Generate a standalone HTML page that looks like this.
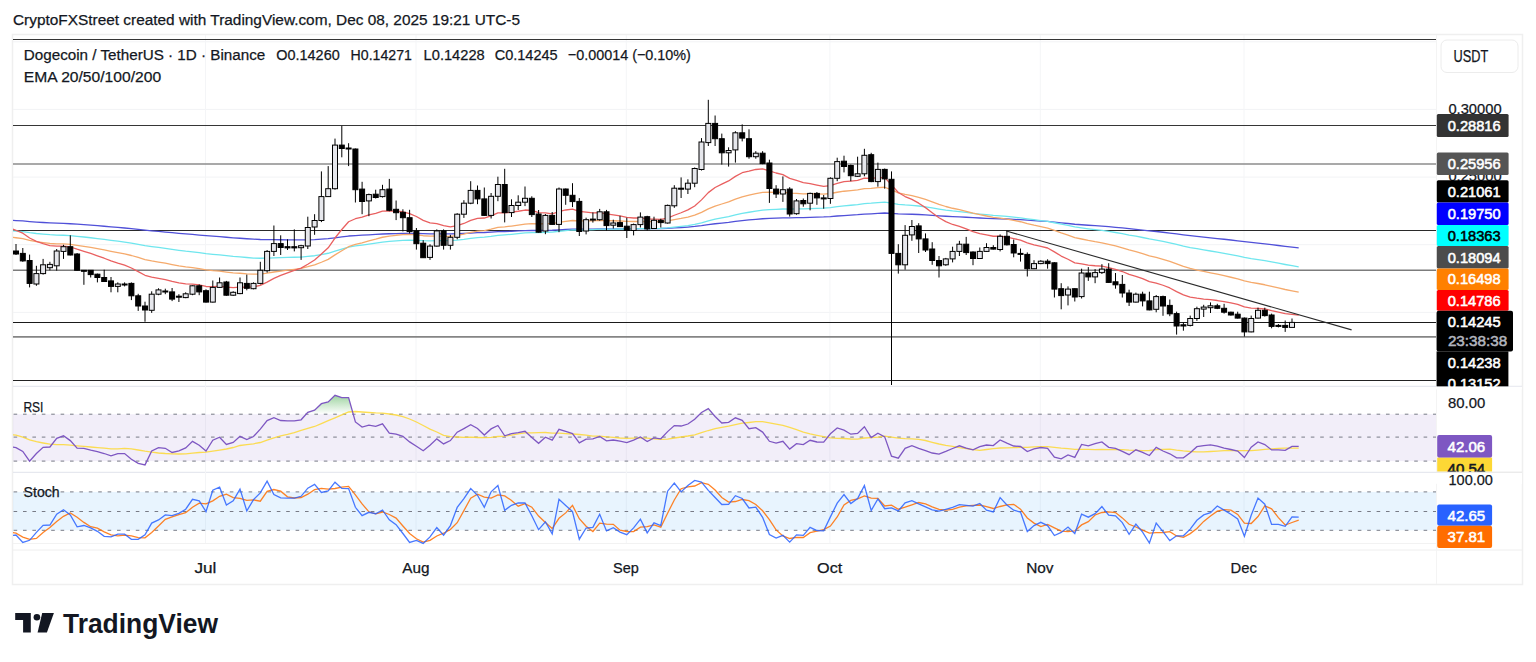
<!DOCTYPE html><html><head><meta charset="utf-8"><style>
html,body{margin:0;padding:0;background:#fff;width:1536px;height:662px;overflow:hidden}
svg{position:absolute;left:0;top:0}
text{font-family:'Liberation Sans', sans-serif}
</style></head><body>
<svg width="1536" height="662" viewBox="0 0 1536 662">
<text x="13" y="24.5" font-size="15.5" fill="#131722" stroke="#131722" stroke-width="0.25" textLength="507" lengthAdjust="spacingAndGlyphs">CryptoFXStreet created with TradingView.com, Dec 08, 2025 19:21 UTC-5</text>
<rect x="12.5" y="34.5" width="1510" height="550" fill="none" stroke="#efefef" stroke-width="1.5"/>
<line x1="13" y1="386.3" x2="1522" y2="386.3" stroke="#e0e3eb" stroke-width="1"/>
<line x1="13" y1="472.3" x2="1522" y2="472.3" stroke="#e0e3eb" stroke-width="1"/>
<line x1="13" y1="550" x2="1522" y2="550" stroke="#eeeeee" stroke-width="1"/>
<line x1="13" y1="543.5" x2="1436" y2="543.5" stroke="#f2f2f2" stroke-width="1"/>
<line x1="1436.5" y1="35" x2="1436.5" y2="584" stroke="#f4f4f4" stroke-width="1"/>
<line x1="13" y1="41.8" x2="1436" y2="41.8" stroke="#f2f3f5" stroke-width="1"/>
<line x1="13" y1="109.4" x2="1436" y2="109.4" stroke="#f2f3f5" stroke-width="1"/>
<line x1="13" y1="177.1" x2="1436" y2="177.1" stroke="#f2f3f5" stroke-width="1"/>
<line x1="13" y1="244.7" x2="1436" y2="244.7" stroke="#f2f3f5" stroke-width="1"/>
<line x1="13" y1="312.4" x2="1436" y2="312.4" stroke="#f2f3f5" stroke-width="1"/>
<line x1="205.5" y1="35" x2="205.5" y2="543" stroke="#f4f5f7" stroke-width="1"/>
<line x1="416.0" y1="35" x2="416.0" y2="543" stroke="#f4f5f7" stroke-width="1"/>
<line x1="626.3" y1="35" x2="626.3" y2="543" stroke="#f4f5f7" stroke-width="1"/>
<line x1="829.9" y1="35" x2="829.9" y2="543" stroke="#f4f5f7" stroke-width="1"/>
<line x1="1040.3" y1="35" x2="1040.3" y2="543" stroke="#f4f5f7" stroke-width="1"/>
<line x1="1244.0" y1="35" x2="1244.0" y2="543" stroke="#f4f5f7" stroke-width="1"/>
<rect x="13" y="414.2" width="1423" height="46.9" fill="#7e57c2" fill-opacity="0.1"/>
<rect x="13" y="491.9" width="1423" height="38.4" fill="#2196f3" fill-opacity="0.1"/>
<line x1="13.6" y1="414.2" x2="1436" y2="414.2" stroke="#787b86" stroke-width="1" stroke-dasharray="3.6 5.8"/>
<line x1="13.6" y1="437.1" x2="1436" y2="437.1" stroke="#787b86" stroke-width="1" stroke-dasharray="3.6 5.8"/>
<line x1="13.6" y1="461.1" x2="1436" y2="461.1" stroke="#787b86" stroke-width="1" stroke-dasharray="3.6 5.8"/>
<line x1="13.6" y1="491.9" x2="1436" y2="491.9" stroke="#787b86" stroke-width="1" stroke-dasharray="3.6 5.8"/>
<line x1="13.6" y1="511.5" x2="1436" y2="511.5" stroke="#787b86" stroke-width="1" stroke-dasharray="3.6 5.8"/>
<line x1="13.6" y1="530.3" x2="1436" y2="530.3" stroke="#787b86" stroke-width="1" stroke-dasharray="3.6 5.8"/>
<line x1="13" y1="39.5" x2="1436" y2="39.5" stroke="#363636" stroke-width="1.1"/>
<line x1="13" y1="125.5" x2="1436" y2="125.5" stroke="#363636" stroke-width="1.1"/>
<line x1="13" y1="164.1" x2="1436" y2="164.1" stroke="#8c8c8c" stroke-width="1.5"/>
<line x1="13" y1="230.5" x2="1436" y2="230.5" stroke="#2a2a2a" stroke-width="1.1"/>
<line x1="13" y1="270.3" x2="1436" y2="270.3" stroke="#7c7c7c" stroke-width="1.4"/>
<line x1="13" y1="322.5" x2="1436" y2="322.5" stroke="#1a1a1a" stroke-width="1.1"/>
<line x1="13" y1="336.8" x2="1436" y2="336.8" stroke="#858585" stroke-width="1.8"/>
<line x1="13" y1="380.5" x2="1436" y2="380.5" stroke="#222222" stroke-width="1.2"/>
<defs><clipPath id="mainclip"><rect x="13" y="36" width="1423" height="350"/></clipPath></defs>
<g clip-path="url(#mainclip)">
<polyline points="9.2,220.20 16.0,220.54 22.8,220.94 29.6,221.56 36.4,222.08 43.1,222.50 49.9,222.92 56.7,223.20 63.5,223.43 70.3,223.75 77.1,224.21 83.9,224.67 90.7,225.17 97.4,225.69 104.2,226.25 111.0,226.84 117.8,227.41 124.6,227.98 131.4,228.65 138.2,229.42 145.0,230.22 151.7,230.86 158.5,231.45 165.3,232.04 172.1,232.71 178.9,233.35 185.7,233.95 192.5,234.47 199.2,235.04 206.0,235.70 212.8,236.22 219.6,236.68 226.4,237.26 233.2,237.81 240.0,238.26 246.8,238.76 253.5,239.20 260.3,239.51 267.1,239.63 273.9,239.67 280.7,239.75 287.5,239.83 294.3,239.91 301.1,239.97 307.8,239.84 314.6,239.65 321.4,239.22 328.2,238.72 335.0,237.79 341.8,236.90 348.6,236.02 355.4,235.56 362.1,235.22 368.9,234.81 375.7,234.44 382.5,234.00 389.3,233.76 396.1,233.55 402.9,233.40 409.6,233.38 416.4,233.48 423.2,233.72 430.0,233.84 436.8,233.81 443.6,233.93 450.4,233.96 457.2,233.77 463.9,233.46 470.7,233.03 477.5,232.69 484.3,232.52 491.1,232.16 497.9,231.69 504.7,231.50 511.5,231.24 518.2,230.95 525.0,230.62 531.8,230.47 538.6,230.48 545.4,230.33 552.2,230.27 559.0,229.86 565.7,229.52 572.5,229.24 579.3,229.26 586.1,229.17 592.9,229.07 599.7,228.90 606.5,228.86 613.3,228.81 620.0,228.78 626.8,228.80 633.6,228.76 640.4,228.64 647.2,228.64 654.0,228.56 660.8,228.50 667.6,228.27 674.3,227.87 681.1,227.49 687.9,227.05 694.7,226.46 701.5,225.62 708.3,224.61 715.1,223.75 721.8,223.05 728.6,222.32 735.4,221.43 742.2,220.60 749.0,219.97 755.8,219.30 762.6,218.75 769.4,218.45 776.1,218.21 782.9,217.92 789.7,217.88 796.5,217.71 803.3,217.58 810.1,217.34 816.9,217.14 823.7,216.96 830.4,216.57 837.2,216.02 844.0,215.53 850.8,215.14 857.6,214.72 864.4,214.13 871.2,213.81 877.9,213.37 884.7,213.02 891.5,213.43 898.3,213.94 905.1,214.15 911.9,214.27 918.7,214.52 925.5,214.87 932.2,215.32 939.0,215.83 945.8,216.26 952.6,216.61 959.4,216.88 966.2,217.24 973.0,217.65 979.8,217.98 986.5,218.28 993.3,218.58 1000.1,218.76 1006.9,219.02 1013.7,219.36 1020.5,219.70 1027.3,220.19 1034.0,220.62 1040.8,221.03 1047.6,221.45 1054.4,222.12 1061.2,222.86 1068.0,223.51 1074.8,224.25 1081.6,224.73 1088.3,225.25 1095.1,225.72 1101.9,226.15 1108.7,226.71 1115.5,227.29 1122.3,227.94 1129.1,228.68 1135.9,229.33 1142.6,230.05 1149.4,230.84 1156.2,231.50 1163.0,232.24 1169.8,233.05 1176.6,233.97 1183.4,234.89 1190.2,235.72 1196.9,236.45 1203.7,237.15 1210.5,237.83 1217.3,238.53 1224.1,239.27 1230.9,240.02 1237.7,240.80 1244.4,241.70 1251.2,242.47 1258.0,243.14 1264.8,243.86 1271.6,244.69 1278.4,245.50 1285.2,246.31 1292.0,247.07 1298.7,247.82" fill="none" stroke="#5050d8" stroke-width="1.3" stroke-linejoin="round"/>
<polyline points="9.2,230.60 16.0,231.06 22.8,231.65 29.6,232.68 36.4,233.49 43.1,234.11 49.9,234.71 56.7,235.03 63.5,235.26 70.3,235.65 77.1,236.34 83.9,237.02 90.7,237.76 97.4,238.55 104.2,239.40 111.0,240.33 117.8,241.20 124.6,242.04 131.4,243.11 138.2,244.35 145.0,245.65 151.7,246.62 158.5,247.47 165.3,248.33 172.1,249.34 178.9,250.29 185.7,251.15 192.5,251.84 199.2,252.63 206.0,253.61 212.8,254.28 219.6,254.84 226.4,255.64 233.2,256.37 240.0,256.89 246.8,257.51 253.5,258.03 260.3,258.27 267.1,258.13 273.9,257.84 280.7,257.64 287.5,257.45 294.3,257.26 301.1,257.03 307.8,256.44 314.6,255.73 321.4,254.56 328.2,253.26 335.0,251.12 341.8,249.08 348.6,247.09 355.4,245.96 362.1,245.08 368.9,244.08 375.7,243.15 382.5,242.09 389.3,241.47 396.1,240.90 402.9,240.44 409.6,240.26 416.4,240.33 423.2,240.67 430.0,240.78 436.8,240.59 443.6,240.68 450.4,240.61 457.2,240.09 463.9,239.36 470.7,238.39 477.5,237.61 484.3,237.17 491.1,236.36 497.9,235.33 504.7,234.88 511.5,234.30 518.2,233.66 525.0,232.96 531.8,232.60 538.6,232.59 545.4,232.25 552.2,232.10 559.0,231.24 565.7,230.53 572.5,229.96 579.3,229.99 586.1,229.78 592.9,229.57 599.7,229.22 606.5,229.15 613.3,229.03 620.0,228.98 626.8,229.01 633.6,228.92 640.4,228.69 647.2,228.69 654.0,228.53 660.8,228.41 667.6,227.95 674.3,227.17 681.1,226.41 687.9,225.56 694.7,224.43 701.5,222.79 708.3,220.83 715.1,219.20 721.8,217.89 728.6,216.55 735.4,214.89 742.2,213.37 749.0,212.25 755.8,211.08 762.6,210.14 769.4,209.71 776.1,209.40 782.9,209.01 789.7,209.11 796.5,208.95 803.3,208.84 810.1,208.54 816.9,208.33 823.7,208.13 830.4,207.54 837.2,206.63 844.0,205.84 850.8,205.24 857.6,204.62 864.4,203.64 871.2,203.21 877.9,202.54 884.7,202.07 891.5,203.08 898.3,204.31 905.1,204.92 911.9,205.35 918.7,206.01 925.5,206.88 932.2,207.95 939.0,209.09 945.8,210.08 952.6,210.90 959.4,211.55 966.2,212.37 973.0,213.28 979.8,214.04 986.5,214.70 993.3,215.38 1000.1,215.79 1006.9,216.37 1013.7,217.09 1020.5,217.83 1027.3,218.84 1034.0,219.73 1040.8,220.55 1047.6,221.40 1054.4,222.74 1061.2,224.18 1068.0,225.47 1074.8,226.89 1081.6,227.80 1088.3,228.77 1095.1,229.64 1101.9,230.42 1108.7,231.45 1115.5,232.51 1122.3,233.70 1129.1,235.06 1135.9,236.23 1142.6,237.51 1149.4,238.94 1156.2,240.08 1163.0,241.39 1169.8,242.82 1176.6,244.47 1183.4,246.09 1190.2,247.52 1196.9,248.73 1203.7,249.89 1210.5,250.99 1217.3,252.13 1224.1,253.32 1230.9,254.54 1237.7,255.80 1244.4,257.31 1251.2,258.52 1258.0,259.54 1264.8,260.65 1271.6,261.95 1278.4,263.23 1285.2,264.50 1292.0,265.65 1298.7,266.77" fill="none" stroke="#6fe6ee" stroke-width="1.3" stroke-linejoin="round"/>
<polyline points="9.2,237.10 16.0,237.76 22.8,238.67 29.6,240.42 36.4,241.73 43.1,242.63 49.9,243.48 56.7,243.78 63.5,243.89 70.3,244.33 77.1,245.35 83.9,246.34 90.7,247.45 97.4,248.63 104.2,249.92 111.0,251.35 117.8,252.63 124.6,253.86 131.4,255.50 138.2,257.48 145.0,259.54 151.7,260.90 158.5,262.04 165.3,263.18 172.1,264.58 178.9,265.86 185.7,266.96 192.5,267.70 199.2,268.65 206.0,269.96 212.8,270.64 219.6,271.12 226.4,272.06 233.2,272.86 240.0,273.25 246.8,273.84 253.5,274.21 260.3,274.06 267.1,273.17 273.9,272.01 280.7,271.05 287.5,270.14 294.3,269.27 301.1,268.35 307.8,266.74 314.6,264.93 321.4,262.25 328.2,259.37 335.0,254.88 341.8,250.71 348.6,246.70 355.4,244.47 362.1,242.78 368.9,240.89 375.7,239.19 382.5,237.25 389.3,236.19 396.1,235.27 402.9,234.58 409.6,234.47 416.4,234.83 423.2,235.73 430.0,236.13 436.8,235.93 443.6,236.30 450.4,236.33 457.2,235.47 463.9,234.20 470.7,232.48 477.5,231.17 484.3,230.55 491.1,229.21 497.9,227.45 504.7,226.87 511.5,226.03 518.2,225.10 525.0,224.05 531.8,223.68 538.6,224.01 545.4,223.67 552.2,223.70 559.0,222.34 565.7,221.28 572.5,220.51 579.3,220.94 586.1,220.89 592.9,220.82 599.7,220.47 606.5,220.67 613.3,220.76 620.0,220.99 626.8,221.36 633.6,221.49 640.4,221.32 647.2,221.61 654.0,221.56 660.8,221.60 667.6,220.97 674.3,219.68 681.1,218.48 687.9,217.10 694.7,215.19 701.5,212.32 708.3,208.84 715.1,206.09 721.8,204.00 728.6,201.90 735.4,199.19 742.2,196.79 749.0,195.22 755.8,193.57 762.6,192.40 769.4,192.24 776.1,192.31 782.9,192.21 789.7,193.07 796.5,193.37 803.3,193.78 810.1,193.77 816.9,193.93 823.7,194.11 830.4,193.49 837.2,192.24 844.0,191.23 850.8,190.62 857.6,189.96 864.4,188.60 871.2,188.33 877.9,187.58 884.7,187.24 891.5,189.84 898.3,192.78 905.1,194.44 911.9,195.70 918.7,197.40 925.5,199.46 932.2,201.85 939.0,204.36 945.8,206.50 952.6,208.26 959.4,209.67 966.2,211.35 973.0,213.20 979.8,214.70 986.5,215.99 993.3,217.28 1000.1,218.03 1006.9,219.08 1013.7,220.41 1020.5,221.74 1027.3,223.58 1034.0,225.15 1040.8,226.57 1047.6,228.02 1054.4,230.42 1061.2,232.97 1068.0,235.17 1074.8,237.60 1081.6,238.99 1088.3,240.47 1095.1,241.73 1101.9,242.81 1108.7,244.36 1115.5,245.94 1122.3,247.79 1129.1,249.92 1135.9,251.66 1142.6,253.59 1149.4,255.80 1156.2,257.40 1163.0,259.30 1169.8,261.44 1176.6,263.97 1183.4,266.40 1190.2,268.45 1196.9,270.02 1203.7,271.48 1210.5,272.82 1217.3,274.22 1224.1,275.71 1230.9,277.25 1237.7,278.85 1244.4,280.93 1251.2,282.40 1258.0,283.50 1264.8,284.76 1271.6,286.39 1278.4,287.96 1285.2,289.50 1292.0,290.79 1298.7,292.04" fill="none" stroke="#f5aa6c" stroke-width="1.3" stroke-linejoin="round"/>
<polyline points="9.2,227.80 16.0,230.30 22.8,233.21 29.6,237.99 36.4,241.38 43.1,243.61 49.9,245.59 56.7,246.11 63.5,246.16 70.3,247.00 77.1,249.22 83.9,251.27 90.7,253.49 97.4,255.78 104.2,258.23 111.0,260.91 117.8,263.11 124.6,265.10 131.4,268.02 138.2,271.64 145.0,275.29 151.7,277.09 158.5,278.31 165.3,279.52 172.1,281.39 178.9,282.89 185.7,283.93 192.5,284.11 199.2,284.85 206.0,286.49 212.8,286.58 219.6,286.22 226.4,287.08 233.2,287.57 240.0,287.12 246.8,287.23 253.5,286.87 260.3,285.29 267.1,282.06 273.9,278.40 280.7,275.46 287.5,272.83 294.3,270.46 301.1,268.10 307.8,264.23 314.6,260.07 321.4,254.02 328.2,247.80 335.0,238.02 341.8,229.49 348.6,221.78 355.4,218.73 362.1,217.09 368.9,214.94 375.7,213.28 382.5,211.04 389.3,210.97 396.1,211.13 402.9,211.76 409.6,213.65 416.4,216.51 423.2,220.43 430.0,222.88 436.8,223.64 443.6,225.70 450.4,226.81 457.2,225.61 463.9,223.47 470.7,220.32 477.5,218.28 484.3,218.01 491.1,215.94 497.9,212.95 504.7,212.91 511.5,212.21 518.2,211.25 525.0,210.02 531.8,210.46 538.6,212.53 545.4,212.80 552.2,213.91 559.0,211.53 565.7,209.99 572.5,209.19 579.3,211.31 586.1,212.11 592.9,212.78 599.7,212.68 606.5,213.91 613.3,214.78 620.0,215.91 626.8,217.30 633.6,217.99 640.4,217.91 647.2,218.95 654.0,219.08 660.8,219.42 667.6,218.08 674.3,215.24 681.1,212.75 687.9,209.93 694.7,205.99 701.5,199.89 708.3,192.61 715.1,187.47 721.8,184.17 728.6,180.96 735.4,176.38 742.2,172.73 749.0,171.21 755.8,169.49 762.6,168.93 769.4,170.79 776.1,173.00 782.9,174.59 789.7,178.35 796.5,180.49 803.3,182.71 810.1,183.73 816.9,185.08 823.7,186.36 830.4,185.59 837.2,183.31 844.0,181.71 850.8,181.13 857.6,180.44 864.4,178.04 871.2,178.38 877.9,177.53 884.7,177.66 891.5,184.87 898.3,192.48 905.1,196.56 911.9,199.41 918.7,203.17 925.5,207.63 932.2,212.67 939.0,217.73 945.8,221.65 952.6,224.48 959.4,226.36 966.2,228.86 973.0,231.68 979.8,233.56 986.5,234.89 993.3,236.24 1000.1,236.25 1006.9,237.06 1013.7,238.58 1020.5,240.09 1027.3,242.81 1034.0,244.79 1040.8,246.35 1047.6,248.00 1054.4,251.91 1061.2,256.07 1068.0,259.22 1074.8,262.82 1081.6,263.79 1088.3,265.03 1095.1,265.76 1101.9,266.07 1108.7,267.63 1115.5,269.26 1122.3,271.52 1129.1,274.44 1135.9,276.32 1142.6,278.66 1149.4,281.64 1156.2,283.06 1163.0,285.25 1169.8,287.96 1176.6,291.59 1183.4,294.86 1190.2,297.12 1196.9,298.22 1203.7,299.06 1210.5,299.71 1217.3,300.52 1224.1,301.64 1230.9,302.91 1237.7,304.36 1244.4,306.98 1251.2,308.08 1258.0,308.29 1264.8,308.98 1271.6,310.64 1278.4,312.14 1285.2,313.60 1292.0,314.44 1298.7,315.20" fill="none" stroke="#e96060" stroke-width="1.3" stroke-linejoin="round"/>
</g>
<g stroke="#000" stroke-width="1"><line x1="16.0" y1="244.0" x2="16.0" y2="255.0"/><line x1="22.8" y1="248.0" x2="22.8" y2="261.8"/><line x1="29.6" y1="254.6" x2="29.6" y2="287.4"/><line x1="36.4" y1="265.8" x2="36.4" y2="285.8"/><line x1="43.1" y1="258.9" x2="43.1" y2="274.6"/><line x1="49.9" y1="261.8" x2="49.9" y2="270.3"/><line x1="56.7" y1="249.0" x2="56.7" y2="270.7"/><line x1="63.5" y1="244.8" x2="63.5" y2="258.9"/><line x1="70.3" y1="235.3" x2="70.3" y2="255.4"/><line x1="77.1" y1="253.0" x2="77.1" y2="270.7"/><line x1="83.9" y1="270.3" x2="83.9" y2="284.8"/><line x1="90.7" y1="270.3" x2="90.7" y2="277.5"/><line x1="97.4" y1="273.6" x2="97.4" y2="282.4"/><line x1="104.2" y1="269.7" x2="104.2" y2="281.5"/><line x1="111.0" y1="277.0" x2="111.0" y2="292.3"/><line x1="117.8" y1="282.4" x2="117.8" y2="292.3"/><line x1="124.6" y1="282.4" x2="124.6" y2="286.4"/><line x1="131.4" y1="282.4" x2="131.4" y2="300.1"/><line x1="138.2" y1="293.8" x2="138.2" y2="310.9"/><line x1="145.0" y1="301.7" x2="145.0" y2="321.7"/><line x1="151.7" y1="291.3" x2="151.7" y2="312.9"/><line x1="158.5" y1="288.3" x2="158.5" y2="295.2"/><line x1="165.3" y1="288.7" x2="165.3" y2="294.2"/><line x1="172.1" y1="288.0" x2="172.1" y2="301.1"/><line x1="178.9" y1="294.2" x2="178.9" y2="302.0"/><line x1="185.7" y1="292.3" x2="185.7" y2="298.2"/><line x1="192.5" y1="285.4" x2="192.5" y2="295.2"/><line x1="199.2" y1="284.4" x2="199.2" y2="295.2"/><line x1="206.0" y1="289.3" x2="206.0" y2="302.5"/><line x1="212.8" y1="280.5" x2="212.8" y2="302.5"/><line x1="219.6" y1="277.5" x2="219.6" y2="288.0"/><line x1="226.4" y1="280.9" x2="226.4" y2="295.8"/><line x1="233.2" y1="291.3" x2="233.2" y2="295.8"/><line x1="240.0" y1="277.5" x2="240.0" y2="294.2"/><line x1="246.8" y1="274.6" x2="246.8" y2="290.3"/><line x1="253.5" y1="282.4" x2="253.5" y2="289.3"/><line x1="260.3" y1="261.8" x2="260.3" y2="284.4"/><line x1="267.1" y1="250.0" x2="267.1" y2="272.6"/><line x1="273.9" y1="225.5" x2="273.9" y2="256.0"/><line x1="280.7" y1="235.3" x2="280.7" y2="255.0"/><line x1="287.5" y1="239.3" x2="287.5" y2="250.0"/><line x1="294.3" y1="229.4" x2="294.3" y2="251.4"/><line x1="301.1" y1="244.8" x2="301.1" y2="259.9"/><line x1="307.8" y1="216.7" x2="307.8" y2="249.0"/><line x1="314.6" y1="214.2" x2="314.6" y2="234.8"/><line x1="321.4" y1="171.4" x2="321.4" y2="222.1"/><line x1="328.2" y1="166.1" x2="328.2" y2="196.6"/><line x1="335.0" y1="138.6" x2="335.0" y2="189.7"/><line x1="341.8" y1="125.9" x2="341.8" y2="157.3"/><line x1="348.6" y1="143.2" x2="348.6" y2="166.1"/><line x1="355.4" y1="148.5" x2="355.4" y2="202.5"/><line x1="362.1" y1="181.8" x2="362.1" y2="214.2"/><line x1="368.9" y1="193.6" x2="368.9" y2="216.2"/><line x1="375.7" y1="189.7" x2="375.7" y2="198.5"/><line x1="382.5" y1="184.8" x2="382.5" y2="197.5"/><line x1="389.3" y1="178.9" x2="389.3" y2="211.3"/><line x1="396.1" y1="200.5" x2="396.1" y2="220.1"/><line x1="402.9" y1="209.3" x2="402.9" y2="231.4"/><line x1="409.6" y1="209.8" x2="409.6" y2="233.4"/><line x1="416.4" y1="228.0" x2="416.4" y2="249.6"/><line x1="423.2" y1="240.2" x2="423.2" y2="257.9"/><line x1="430.0" y1="244.2" x2="430.0" y2="259.9"/><line x1="436.8" y1="229.4" x2="436.8" y2="246.6"/><line x1="443.6" y1="229.4" x2="443.6" y2="249.6"/><line x1="450.4" y1="234.8" x2="450.4" y2="249.6"/><line x1="457.2" y1="213.2" x2="457.2" y2="239.3"/><line x1="463.9" y1="200.2" x2="463.9" y2="217.9"/><line x1="470.7" y1="181.2" x2="470.7" y2="204.2"/><line x1="477.5" y1="185.5" x2="477.5" y2="204.2"/><line x1="484.3" y1="187.5" x2="484.3" y2="216.0"/><line x1="491.1" y1="193.0" x2="491.1" y2="218.5"/><line x1="497.9" y1="176.7" x2="497.9" y2="201.2"/><line x1="504.7" y1="168.8" x2="504.7" y2="222.4"/><line x1="511.5" y1="199.3" x2="511.5" y2="217.0"/><line x1="518.2" y1="195.3" x2="518.2" y2="210.0"/><line x1="525.0" y1="186.5" x2="525.0" y2="206.1"/><line x1="531.8" y1="196.3" x2="531.8" y2="217.0"/><line x1="538.6" y1="210.0" x2="538.6" y2="232.6"/><line x1="545.4" y1="214.0" x2="545.4" y2="234.2"/><line x1="552.2" y1="212.0" x2="552.2" y2="224.8"/><line x1="559.0" y1="187.5" x2="559.0" y2="232.2"/><line x1="565.7" y1="188.5" x2="565.7" y2="204.8"/><line x1="572.5" y1="183.2" x2="572.5" y2="207.1"/><line x1="579.3" y1="198.1" x2="579.3" y2="236.0"/><line x1="586.1" y1="217.7" x2="586.1" y2="234.4"/><line x1="592.9" y1="212.4" x2="592.9" y2="222.6"/><line x1="599.7" y1="208.9" x2="599.7" y2="220.7"/><line x1="606.5" y1="209.9" x2="606.5" y2="230.5"/><line x1="613.3" y1="219.7" x2="613.3" y2="228.5"/><line x1="620.0" y1="215.8" x2="620.0" y2="227.0"/><line x1="626.8" y1="217.7" x2="626.8" y2="238.0"/><line x1="633.6" y1="223.6" x2="633.6" y2="235.4"/><line x1="640.4" y1="212.4" x2="640.4" y2="227.5"/><line x1="647.2" y1="215.8" x2="647.2" y2="230.5"/><line x1="654.0" y1="216.7" x2="654.0" y2="228.9"/><line x1="660.8" y1="218.7" x2="660.8" y2="227.5"/><line x1="667.6" y1="204.6" x2="667.6" y2="223.6"/><line x1="674.3" y1="185.2" x2="674.3" y2="207.8"/><line x1="681.1" y1="177.4" x2="681.1" y2="198.0"/><line x1="687.9" y1="179.3" x2="687.9" y2="194.0"/><line x1="694.7" y1="167.5" x2="694.7" y2="187.2"/><line x1="701.5" y1="138.1" x2="701.5" y2="170.5"/><line x1="708.3" y1="99.8" x2="708.3" y2="146.0"/><line x1="715.1" y1="115.5" x2="715.1" y2="146.0"/><line x1="721.8" y1="133.6" x2="721.8" y2="164.6"/><line x1="728.6" y1="147.3" x2="728.6" y2="166.6"/><line x1="735.4" y1="131.2" x2="735.4" y2="162.6"/><line x1="742.2" y1="124.4" x2="742.2" y2="141.4"/><line x1="749.0" y1="129.3" x2="749.0" y2="158.7"/><line x1="755.8" y1="151.2" x2="755.8" y2="158.7"/><line x1="762.6" y1="151.2" x2="762.6" y2="164.2"/><line x1="769.4" y1="159.7" x2="769.4" y2="202.9"/><line x1="776.1" y1="185.2" x2="776.1" y2="198.0"/><line x1="782.9" y1="176.4" x2="782.9" y2="201.9"/><line x1="789.7" y1="187.2" x2="789.7" y2="216.6"/><line x1="796.5" y1="199.0" x2="796.5" y2="214.7"/><line x1="803.3" y1="198.5" x2="803.3" y2="206.7"/><line x1="810.1" y1="192.6" x2="810.1" y2="210.3"/><line x1="816.9" y1="192.0" x2="816.9" y2="204.8"/><line x1="823.7" y1="195.0" x2="823.7" y2="208.7"/><line x1="830.4" y1="177.3" x2="830.4" y2="203.8"/><line x1="837.2" y1="157.7" x2="837.2" y2="181.2"/><line x1="844.0" y1="155.7" x2="844.0" y2="172.4"/><line x1="850.8" y1="164.5" x2="850.8" y2="181.2"/><line x1="857.6" y1="156.7" x2="857.6" y2="176.9"/><line x1="864.4" y1="148.8" x2="864.4" y2="176.3"/><line x1="871.2" y1="152.8" x2="871.2" y2="182.2"/><line x1="877.9" y1="162.6" x2="877.9" y2="186.7"/><line x1="884.7" y1="168.5" x2="884.7" y2="188.7"/><line x1="891.5" y1="171.4" x2="891.5" y2="385.0"/><line x1="898.3" y1="244.2" x2="898.3" y2="273.6"/><line x1="905.1" y1="225.1" x2="905.1" y2="269.7"/><line x1="911.9" y1="220.0" x2="911.9" y2="240.8"/><line x1="918.7" y1="223.2" x2="918.7" y2="253.0"/><line x1="925.5" y1="233.4" x2="925.5" y2="252.0"/><line x1="932.2" y1="242.2" x2="932.2" y2="264.8"/><line x1="939.0" y1="256.0" x2="939.0" y2="277.5"/><line x1="945.8" y1="257.9" x2="945.8" y2="265.8"/><line x1="952.6" y1="246.7" x2="952.6" y2="262.4"/><line x1="959.4" y1="240.8" x2="959.4" y2="256.0"/><line x1="966.2" y1="236.9" x2="966.2" y2="255.0"/><line x1="973.0" y1="251.4" x2="973.0" y2="265.2"/><line x1="979.8" y1="247.5" x2="979.8" y2="258.9"/><line x1="986.5" y1="243.2" x2="986.5" y2="252.0"/><line x1="993.3" y1="245.2" x2="993.3" y2="249.5"/><line x1="1000.1" y1="234.4" x2="1000.1" y2="251.4"/><line x1="1006.9" y1="230.4" x2="1006.9" y2="245.5"/><line x1="1013.7" y1="239.6" x2="1013.7" y2="257.3"/><line x1="1020.5" y1="248.5" x2="1020.5" y2="261.6"/><line x1="1027.3" y1="252.4" x2="1027.3" y2="276.5"/><line x1="1034.0" y1="260.2" x2="1034.0" y2="269.1"/><line x1="1040.8" y1="260.2" x2="1040.8" y2="264.2"/><line x1="1047.6" y1="259.3" x2="1047.6" y2="268.7"/><line x1="1054.4" y1="262.2" x2="1054.4" y2="297.5"/><line x1="1061.2" y1="283.2" x2="1061.2" y2="309.3"/><line x1="1068.0" y1="286.4" x2="1068.0" y2="305.4"/><line x1="1074.8" y1="288.3" x2="1074.8" y2="301.5"/><line x1="1081.6" y1="268.7" x2="1081.6" y2="298.5"/><line x1="1088.3" y1="267.1" x2="1088.3" y2="280.9"/><line x1="1095.1" y1="269.1" x2="1095.1" y2="283.2"/><line x1="1101.9" y1="264.2" x2="1101.9" y2="274.0"/><line x1="1108.7" y1="263.2" x2="1108.7" y2="282.8"/><line x1="1115.5" y1="273.0" x2="1115.5" y2="288.7"/><line x1="1122.3" y1="275.0" x2="1122.3" y2="297.5"/><line x1="1129.1" y1="289.7" x2="1129.1" y2="306.0"/><line x1="1135.9" y1="292.6" x2="1135.9" y2="302.5"/><line x1="1142.6" y1="291.7" x2="1142.6" y2="306.4"/><line x1="1149.4" y1="291.7" x2="1149.4" y2="310.3"/><line x1="1156.2" y1="295.0" x2="1156.2" y2="312.3"/><line x1="1163.0" y1="295.6" x2="1163.0" y2="315.8"/><line x1="1169.8" y1="299.5" x2="1169.8" y2="316.2"/><line x1="1176.6" y1="311.7" x2="1176.6" y2="334.6"/><line x1="1183.4" y1="322.4" x2="1183.4" y2="330.7"/><line x1="1190.2" y1="315.6" x2="1190.2" y2="326.4"/><line x1="1196.9" y1="306.7" x2="1196.9" y2="320.9"/><line x1="1203.7" y1="304.8" x2="1203.7" y2="317.0"/><line x1="1210.5" y1="302.4" x2="1210.5" y2="313.0"/><line x1="1217.3" y1="303.8" x2="1217.3" y2="309.1"/><line x1="1224.1" y1="303.8" x2="1224.1" y2="313.6"/><line x1="1230.9" y1="311.7" x2="1230.9" y2="315.6"/><line x1="1237.7" y1="311.7" x2="1237.7" y2="318.5"/><line x1="1244.4" y1="317.5" x2="1244.4" y2="336.6"/><line x1="1251.2" y1="315.6" x2="1251.2" y2="332.3"/><line x1="1258.0" y1="307.7" x2="1258.0" y2="318.5"/><line x1="1264.8" y1="307.7" x2="1264.8" y2="316.6"/><line x1="1271.6" y1="313.6" x2="1271.6" y2="328.3"/><line x1="1278.4" y1="324.0" x2="1278.4" y2="327.4"/><line x1="1285.2" y1="320.5" x2="1285.2" y2="331.9"/><line x1="1292.0" y1="318.5" x2="1292.0" y2="327.4"/><rect x="13.5" y="251.0" width="5" height="3.0" fill="#000"/><rect x="20.3" y="253.4" width="5" height="7.5" fill="#000"/><rect x="27.1" y="260.5" width="5" height="22.9" fill="#000"/><rect x="33.9" y="273.6" width="5" height="10.4" fill="#e6e7ec"/><rect x="40.6" y="264.8" width="5" height="8.8" fill="#e6e7ec"/><rect x="47.4" y="264.4" width="5" height="3.3" fill="#e6e7ec"/><rect x="54.2" y="251.0" width="5" height="14.8" fill="#e6e7ec"/><rect x="61.0" y="246.7" width="5" height="4.7" fill="#e6e7ec"/><rect x="67.8" y="246.7" width="5" height="8.3" fill="#000"/><rect x="74.6" y="254.0" width="5" height="16.3" fill="#000"/><rect x="81.4" y="270.3" width="5" height="1.0" fill="#000"/><rect x="88.2" y="270.3" width="5" height="4.3" fill="#000"/><rect x="94.9" y="274.2" width="5" height="3.3" fill="#000"/><rect x="101.7" y="277.5" width="5" height="4.0" fill="#000"/><rect x="108.5" y="280.9" width="5" height="5.5" fill="#000"/><rect x="115.3" y="284.0" width="5" height="2.4" fill="#e6e7ec"/><rect x="122.1" y="284.0" width="5" height="1.0" fill="#e6e7ec"/><rect x="128.9" y="283.4" width="5" height="12.4" fill="#000"/><rect x="135.7" y="295.8" width="5" height="10.2" fill="#000"/><rect x="142.5" y="306.0" width="5" height="4.0" fill="#000"/><rect x="149.2" y="294.2" width="5" height="16.1" fill="#e6e7ec"/><rect x="156.0" y="289.9" width="5" height="4.3" fill="#e6e7ec"/><rect x="162.8" y="291.0" width="5" height="1.0" fill="#e6e7ec"/><rect x="169.6" y="291.9" width="5" height="7.2" fill="#000"/><rect x="176.4" y="296.2" width="5" height="1.0" fill="#000"/><rect x="183.2" y="293.8" width="5" height="3.8" fill="#e6e7ec"/><rect x="190.0" y="285.8" width="5" height="8.4" fill="#e6e7ec"/><rect x="196.7" y="285.8" width="5" height="6.1" fill="#000"/><rect x="203.5" y="290.7" width="5" height="11.4" fill="#000"/><rect x="210.3" y="287.4" width="5" height="14.7" fill="#e6e7ec"/><rect x="217.1" y="282.8" width="5" height="4.6" fill="#e6e7ec"/><rect x="223.9" y="282.0" width="5" height="13.2" fill="#000"/><rect x="230.7" y="292.3" width="5" height="2.9" fill="#e6e7ec"/><rect x="237.5" y="282.8" width="5" height="10.8" fill="#e6e7ec"/><rect x="244.3" y="283.4" width="5" height="4.9" fill="#000"/><rect x="251.0" y="283.4" width="5" height="5.3" fill="#e6e7ec"/><rect x="257.8" y="270.3" width="5" height="13.1" fill="#e6e7ec"/><rect x="264.6" y="251.4" width="5" height="19.3" fill="#e6e7ec"/><rect x="271.4" y="243.6" width="5" height="7.8" fill="#e6e7ec"/><rect x="278.2" y="243.6" width="5" height="3.9" fill="#000"/><rect x="285.0" y="246.7" width="5" height="1.2" fill="#000"/><rect x="291.8" y="246.7" width="5" height="1.2" fill="#000"/><rect x="298.6" y="245.7" width="5" height="2.0" fill="#e6e7ec"/><rect x="305.3" y="227.5" width="5" height="18.5" fill="#e6e7ec"/><rect x="312.1" y="220.5" width="5" height="6.5" fill="#e6e7ec"/><rect x="318.9" y="196.6" width="5" height="23.9" fill="#e6e7ec"/><rect x="325.7" y="188.7" width="5" height="7.9" fill="#e6e7ec"/><rect x="332.5" y="145.1" width="5" height="43.6" fill="#e6e7ec"/><rect x="339.3" y="145.1" width="5" height="3.4" fill="#000"/><rect x="346.1" y="148.0" width="5" height="1.0" fill="#000"/><rect x="352.9" y="149.0" width="5" height="40.7" fill="#000"/><rect x="359.6" y="189.1" width="5" height="12.4" fill="#000"/><rect x="366.4" y="194.6" width="5" height="6.3" fill="#e6e7ec"/><rect x="373.2" y="194.2" width="5" height="3.3" fill="#000"/><rect x="380.0" y="189.7" width="5" height="6.9" fill="#e6e7ec"/><rect x="386.8" y="189.1" width="5" height="21.2" fill="#000"/><rect x="393.6" y="209.3" width="5" height="3.4" fill="#000"/><rect x="400.4" y="212.3" width="5" height="5.4" fill="#000"/><rect x="407.1" y="217.7" width="5" height="13.9" fill="#000"/><rect x="413.9" y="230.9" width="5" height="12.8" fill="#000"/><rect x="420.7" y="243.2" width="5" height="14.5" fill="#000"/><rect x="427.5" y="246.1" width="5" height="11.3" fill="#e6e7ec"/><rect x="434.3" y="230.9" width="5" height="15.2" fill="#e6e7ec"/><rect x="441.1" y="230.9" width="5" height="14.4" fill="#000"/><rect x="447.9" y="237.3" width="5" height="8.0" fill="#e6e7ec"/><rect x="454.7" y="214.2" width="5" height="23.1" fill="#e6e7ec"/><rect x="461.4" y="203.2" width="5" height="11.0" fill="#e6e7ec"/><rect x="468.2" y="190.4" width="5" height="12.8" fill="#e6e7ec"/><rect x="475.0" y="190.4" width="5" height="8.5" fill="#000"/><rect x="481.8" y="198.9" width="5" height="16.5" fill="#000"/><rect x="488.6" y="196.3" width="5" height="19.1" fill="#e6e7ec"/><rect x="495.4" y="184.5" width="5" height="11.8" fill="#e6e7ec"/><rect x="502.2" y="184.5" width="5" height="28.1" fill="#000"/><rect x="509.0" y="205.5" width="5" height="7.1" fill="#e6e7ec"/><rect x="515.7" y="202.2" width="5" height="3.3" fill="#e6e7ec"/><rect x="522.5" y="198.3" width="5" height="3.9" fill="#e6e7ec"/><rect x="529.3" y="198.3" width="5" height="16.3" fill="#000"/><rect x="536.1" y="214.0" width="5" height="18.2" fill="#000"/><rect x="542.9" y="215.4" width="5" height="15.6" fill="#e6e7ec"/><rect x="549.7" y="215.4" width="5" height="9.0" fill="#000"/><rect x="556.5" y="189.0" width="5" height="35.4" fill="#e6e7ec"/><rect x="563.2" y="189.0" width="5" height="6.3" fill="#000"/><rect x="570.0" y="195.3" width="5" height="6.3" fill="#000"/><rect x="576.8" y="201.4" width="5" height="30.1" fill="#000"/><rect x="583.6" y="219.7" width="5" height="11.3" fill="#e6e7ec"/><rect x="590.4" y="219.1" width="5" height="1.0" fill="#e6e7ec"/><rect x="597.2" y="211.8" width="5" height="7.9" fill="#e6e7ec"/><rect x="604.0" y="211.8" width="5" height="13.8" fill="#000"/><rect x="610.8" y="223.0" width="5" height="2.2" fill="#e6e7ec"/><rect x="617.5" y="222.6" width="5" height="4.0" fill="#000"/><rect x="624.3" y="226.2" width="5" height="4.3" fill="#000"/><rect x="631.1" y="224.6" width="5" height="5.9" fill="#e6e7ec"/><rect x="637.9" y="217.1" width="5" height="7.5" fill="#e6e7ec"/><rect x="644.7" y="216.7" width="5" height="12.2" fill="#000"/><rect x="651.5" y="220.3" width="5" height="8.2" fill="#e6e7ec"/><rect x="658.3" y="220.3" width="5" height="2.3" fill="#000"/><rect x="665.1" y="205.4" width="5" height="17.6" fill="#e6e7ec"/><rect x="671.8" y="188.2" width="5" height="17.6" fill="#e6e7ec"/><rect x="678.6" y="188.2" width="5" height="1.0" fill="#000"/><rect x="685.4" y="183.2" width="5" height="5.9" fill="#e6e7ec"/><rect x="692.2" y="168.5" width="5" height="14.7" fill="#e6e7ec"/><rect x="699.0" y="142.0" width="5" height="27.5" fill="#e6e7ec"/><rect x="705.8" y="123.4" width="5" height="19.2" fill="#e6e7ec"/><rect x="712.6" y="123.4" width="5" height="15.3" fill="#000"/><rect x="719.3" y="138.7" width="5" height="14.1" fill="#000"/><rect x="726.1" y="150.5" width="5" height="2.3" fill="#e6e7ec"/><rect x="732.9" y="132.8" width="5" height="17.1" fill="#e6e7ec"/><rect x="739.7" y="132.8" width="5" height="5.3" fill="#000"/><rect x="746.5" y="138.7" width="5" height="18.0" fill="#000"/><rect x="753.3" y="153.2" width="5" height="3.5" fill="#e6e7ec"/><rect x="760.1" y="153.2" width="5" height="10.4" fill="#000"/><rect x="766.9" y="163.0" width="5" height="25.5" fill="#000"/><rect x="773.6" y="189.1" width="5" height="4.9" fill="#000"/><rect x="780.4" y="189.7" width="5" height="4.3" fill="#e6e7ec"/><rect x="787.2" y="189.1" width="5" height="24.9" fill="#000"/><rect x="794.0" y="200.9" width="5" height="12.8" fill="#e6e7ec"/><rect x="800.8" y="200.5" width="5" height="3.3" fill="#000"/><rect x="807.6" y="193.4" width="5" height="9.8" fill="#e6e7ec"/><rect x="814.4" y="193.4" width="5" height="4.5" fill="#000"/><rect x="821.2" y="197.9" width="5" height="1.0" fill="#000"/><rect x="827.9" y="178.3" width="5" height="20.2" fill="#e6e7ec"/><rect x="834.7" y="161.6" width="5" height="16.7" fill="#e6e7ec"/><rect x="841.5" y="161.2" width="5" height="5.3" fill="#000"/><rect x="848.3" y="165.5" width="5" height="10.2" fill="#000"/><rect x="855.1" y="173.8" width="5" height="2.5" fill="#e6e7ec"/><rect x="861.9" y="155.3" width="5" height="18.5" fill="#e6e7ec"/><rect x="868.7" y="154.7" width="5" height="26.9" fill="#000"/><rect x="875.4" y="169.4" width="5" height="12.2" fill="#e6e7ec"/><rect x="882.2" y="169.4" width="5" height="9.5" fill="#000"/><rect x="889.0" y="179.3" width="5" height="74.1" fill="#000"/><rect x="895.8" y="253.4" width="5" height="11.4" fill="#000"/><rect x="902.6" y="235.3" width="5" height="29.5" fill="#e6e7ec"/><rect x="909.4" y="226.5" width="5" height="8.4" fill="#e6e7ec"/><rect x="916.2" y="225.9" width="5" height="13.0" fill="#000"/><rect x="923.0" y="238.9" width="5" height="11.1" fill="#000"/><rect x="929.7" y="249.0" width="5" height="11.5" fill="#000"/><rect x="936.5" y="260.5" width="5" height="5.3" fill="#000"/><rect x="943.3" y="258.9" width="5" height="5.9" fill="#e6e7ec"/><rect x="950.1" y="251.4" width="5" height="7.5" fill="#e6e7ec"/><rect x="956.9" y="244.2" width="5" height="7.2" fill="#e6e7ec"/><rect x="963.7" y="244.2" width="5" height="8.4" fill="#000"/><rect x="970.5" y="252.0" width="5" height="6.5" fill="#000"/><rect x="977.3" y="251.4" width="5" height="7.1" fill="#e6e7ec"/><rect x="984.0" y="247.5" width="5" height="3.9" fill="#e6e7ec"/><rect x="990.8" y="247.5" width="5" height="1.6" fill="#000"/><rect x="997.6" y="236.3" width="5" height="13.2" fill="#e6e7ec"/><rect x="1004.4" y="236.3" width="5" height="8.5" fill="#000"/><rect x="1011.2" y="244.5" width="5" height="8.5" fill="#000"/><rect x="1018.0" y="253.4" width="5" height="1.0" fill="#000"/><rect x="1024.8" y="254.4" width="5" height="14.3" fill="#000"/><rect x="1031.5" y="263.6" width="5" height="5.1" fill="#e6e7ec"/><rect x="1038.3" y="261.2" width="5" height="2.4" fill="#e6e7ec"/><rect x="1045.1" y="261.2" width="5" height="2.4" fill="#000"/><rect x="1051.9" y="262.8" width="5" height="26.3" fill="#000"/><rect x="1058.7" y="288.7" width="5" height="6.9" fill="#000"/><rect x="1065.5" y="289.1" width="5" height="5.9" fill="#e6e7ec"/><rect x="1072.3" y="288.7" width="5" height="8.3" fill="#000"/><rect x="1079.1" y="273.0" width="5" height="23.6" fill="#e6e7ec"/><rect x="1085.8" y="273.0" width="5" height="3.9" fill="#000"/><rect x="1092.6" y="272.6" width="5" height="4.3" fill="#e6e7ec"/><rect x="1099.4" y="269.1" width="5" height="3.5" fill="#e6e7ec"/><rect x="1106.2" y="269.1" width="5" height="13.3" fill="#000"/><rect x="1113.0" y="281.8" width="5" height="3.0" fill="#000"/><rect x="1119.8" y="284.4" width="5" height="8.6" fill="#000"/><rect x="1126.6" y="293.0" width="5" height="9.1" fill="#000"/><rect x="1133.4" y="294.2" width="5" height="7.9" fill="#e6e7ec"/><rect x="1140.1" y="294.2" width="5" height="6.7" fill="#000"/><rect x="1146.9" y="300.9" width="5" height="9.0" fill="#000"/><rect x="1153.7" y="296.6" width="5" height="12.7" fill="#e6e7ec"/><rect x="1160.5" y="296.6" width="5" height="9.4" fill="#000"/><rect x="1167.3" y="305.4" width="5" height="8.4" fill="#000"/><rect x="1174.1" y="313.6" width="5" height="12.4" fill="#000"/><rect x="1180.9" y="324.8" width="5" height="1.2" fill="#000"/><rect x="1187.7" y="318.5" width="5" height="6.9" fill="#e6e7ec"/><rect x="1194.4" y="308.7" width="5" height="9.8" fill="#e6e7ec"/><rect x="1201.2" y="307.1" width="5" height="2.0" fill="#e6e7ec"/><rect x="1208.0" y="305.8" width="5" height="1.9" fill="#e6e7ec"/><rect x="1214.8" y="305.8" width="5" height="2.5" fill="#000"/><rect x="1221.6" y="308.3" width="5" height="3.9" fill="#000"/><rect x="1228.4" y="312.2" width="5" height="2.8" fill="#000"/><rect x="1235.2" y="314.2" width="5" height="3.9" fill="#000"/><rect x="1241.9" y="318.1" width="5" height="13.8" fill="#000"/><rect x="1248.7" y="318.5" width="5" height="13.4" fill="#e6e7ec"/><rect x="1255.5" y="310.3" width="5" height="7.8" fill="#e6e7ec"/><rect x="1262.3" y="310.3" width="5" height="5.3" fill="#000"/><rect x="1269.1" y="315.0" width="5" height="11.4" fill="#000"/><rect x="1275.9" y="325.4" width="5" height="1.0" fill="#000"/><rect x="1282.7" y="325.4" width="5" height="2.0" fill="#000"/><rect x="1289.5" y="322.4" width="5" height="5.0" fill="#e6e7ec"/></g>
<line x1="1006.3" y1="231" x2="1351.6" y2="329.9" stroke="#2a2a2a" stroke-width="1.1"/>
<defs><linearGradient id="gf" gradientUnits="userSpaceOnUse" x1="0" y1="395" x2="0" y2="414.2"><stop offset="0" stop-color="#4caf50" stop-opacity="0.55"/><stop offset="1" stop-color="#4caf50" stop-opacity="0"/></linearGradient><clipPath id="ob"><rect x="0" y="380" width="1436" height="34.2"/></clipPath></defs>
<polygon points="16.0,414.2 16.0,447.7 22.8,451.5 29.6,461.2 36.4,453.5 43.1,447.3 49.9,447.0 56.7,438.3 63.5,435.8 70.3,440.6 77.1,448.2 83.9,448.4 90.7,450.2 97.4,451.6 104.2,453.5 111.0,455.8 117.8,453.6 124.6,453.6 131.4,459.3 138.2,463.4 145.0,464.9 151.7,450.9 158.5,447.7 165.3,448.3 172.1,452.5 178.9,450.9 185.7,447.9 192.5,441.4 199.2,445.3 206.0,451.0 212.8,440.2 219.6,437.2 226.4,444.4 233.2,442.4 240.0,436.3 246.8,439.6 253.5,436.5 260.3,429.1 267.1,420.6 273.9,417.7 280.7,420.5 287.5,420.8 294.3,420.8 301.1,419.8 307.8,412.4 314.6,410.1 321.4,403.7 328.2,402.0 335.0,395.3 341.8,397.6 348.6,397.6 355.4,421.9 362.1,427.1 368.9,425.1 375.7,426.4 382.5,423.9 389.3,433.2 396.1,434.2 402.9,436.3 409.6,441.9 416.4,446.2 423.2,450.7 430.0,445.3 436.8,438.9 443.6,443.9 450.4,440.6 457.2,432.2 463.9,428.6 470.7,424.8 477.5,428.5 484.3,435.0 491.1,428.9 497.9,425.5 504.7,435.8 511.5,433.6 518.2,432.6 525.0,431.3 531.8,437.5 538.6,443.3 545.4,437.2 552.2,440.2 559.0,429.3 565.7,431.4 572.5,433.6 579.3,442.9 586.1,439.1 592.9,438.9 599.7,436.4 606.5,440.9 613.3,440.0 620.0,441.2 626.8,442.6 633.6,440.1 640.4,436.9 647.2,441.6 654.0,437.9 660.8,438.8 667.6,431.6 674.3,425.6 681.1,426.0 687.9,424.0 694.7,419.3 701.5,412.5 708.3,408.6 715.1,416.5 721.8,423.0 728.6,422.4 735.4,417.8 742.2,420.3 749.0,428.7 755.8,427.6 762.6,432.1 769.4,441.3 776.1,443.1 782.9,441.3 789.7,449.1 796.5,443.7 803.3,444.6 810.1,440.3 816.9,442.0 823.7,442.2 830.4,433.8 837.2,428.0 844.0,430.2 850.8,434.2 857.6,433.4 864.4,426.7 871.2,437.6 877.9,433.3 884.7,436.9 891.5,456.2 898.3,458.2 905.1,448.3 911.9,445.6 918.7,448.3 925.5,450.7 932.2,453.0 939.0,454.1 945.8,451.4 952.6,448.5 959.4,445.8 966.2,448.1 973.0,449.8 979.8,446.7 986.5,445.0 993.3,445.6 1000.1,439.9 1006.9,443.1 1013.7,446.0 1020.5,446.5 1027.3,451.5 1034.0,448.8 1040.8,447.5 1047.6,448.4 1054.4,457.1 1061.2,458.9 1068.0,455.0 1074.8,457.4 1081.6,444.4 1088.3,445.9 1095.1,443.7 1101.9,441.9 1108.7,447.3 1115.5,448.3 1122.3,451.4 1129.1,454.7 1135.9,449.8 1142.6,452.3 1149.4,455.5 1156.2,447.4 1163.0,451.0 1169.8,453.8 1176.6,457.8 1183.4,457.8 1190.2,452.7 1196.9,446.7 1203.7,445.7 1210.5,444.9 1217.3,446.1 1224.1,448.1 1230.9,449.5 1237.7,451.1 1244.4,457.5 1251.2,447.2 1258.0,441.9 1264.8,444.6 1271.6,449.9 1278.4,449.9 1285.2,450.4 1292.0,446.4 1298.7,446.4 1298.7,414.2" fill="url(#gf)" clip-path="url(#ob)"/>
<defs><clipPath id="pane"><rect x="13" y="386" width="1423" height="164"/></clipPath></defs><g clip-path="url(#pane)">
<polyline points="9.2,434.8 16.0,435.1 22.8,437.2 29.6,439.8 36.4,441.7 43.1,443.0 49.9,444.2 56.7,444.6 63.5,444.7 70.3,445.1 77.1,445.8 83.9,446.4 90.7,447.0 97.4,447.6 104.2,448.2 111.0,448.8 117.8,448.9 124.6,448.4 131.4,448.8 138.2,450.0 145.0,451.2 151.7,452.1 158.5,453.0 165.3,453.5 172.1,453.8 178.9,454.0 185.7,453.9 192.5,453.1 199.2,452.5 206.0,452.2 212.8,451.2 219.6,450.1 226.4,449.0 233.2,447.5 240.0,445.5 246.8,444.6 253.5,443.8 260.3,442.5 267.1,440.2 273.9,437.8 280.7,435.9 287.5,434.4 294.3,432.7 301.1,430.4 307.8,428.4 314.6,426.5 321.4,423.6 328.2,420.7 335.0,417.8 341.8,414.8 348.6,412.0 355.4,411.5 362.1,412.0 368.9,412.5 375.7,412.9 382.5,413.1 389.3,414.0 396.1,415.0 402.9,416.7 409.6,419.0 416.4,422.0 423.2,425.5 430.0,429.1 436.8,432.0 443.6,435.4 450.4,436.7 457.2,437.0 463.9,437.3 470.7,437.2 477.5,437.5 484.3,437.7 491.1,437.3 497.9,436.5 504.7,436.1 511.5,435.2 518.2,433.9 525.0,432.9 531.8,432.8 538.6,432.7 545.4,432.5 552.2,433.1 559.0,433.1 565.7,433.6 572.5,434.0 579.3,434.5 586.1,435.2 592.9,436.2 599.7,436.2 606.5,436.8 613.3,437.3 620.0,438.0 626.8,438.4 633.6,438.1 640.4,438.1 647.2,438.2 654.0,438.8 660.8,439.3 667.6,439.2 674.3,438.0 681.1,437.0 687.9,436.0 694.7,434.8 701.5,432.7 708.3,430.5 715.1,428.7 721.8,427.3 728.6,426.1 735.4,424.7 742.2,423.2 749.0,422.5 755.8,421.7 762.6,421.7 769.4,422.9 776.1,424.1 782.9,425.3 789.7,427.4 796.5,429.7 803.3,432.2 810.1,433.9 816.9,435.3 823.7,436.7 830.4,437.9 837.2,438.4 844.0,438.5 850.8,439.0 857.6,439.1 864.4,438.0 871.2,437.6 877.9,437.1 884.7,436.2 891.5,437.1 898.3,438.1 905.1,438.6 911.9,438.9 918.7,439.3 925.5,440.5 932.2,442.3 939.0,444.0 945.8,445.3 952.6,446.3 959.4,447.7 966.2,448.5 973.0,449.6 979.8,450.3 986.5,449.5 993.3,448.6 1000.1,448.0 1006.9,447.9 1013.7,447.7 1020.5,447.4 1027.3,447.3 1034.0,446.9 1040.8,446.6 1047.6,446.6 1054.4,447.4 1061.2,448.2 1068.0,448.6 1074.8,449.3 1081.6,449.3 1088.3,449.3 1095.1,449.6 1101.9,449.5 1108.7,449.6 1115.5,449.7 1122.3,449.7 1129.1,450.1 1135.9,450.3 1142.6,450.6 1149.4,450.5 1156.2,449.6 1163.0,449.4 1169.8,449.1 1176.6,450.1 1183.4,450.9 1190.2,451.5 1196.9,451.9 1203.7,451.8 1210.5,451.5 1217.3,451.1 1224.1,450.7 1230.9,450.7 1237.7,450.6 1244.4,450.7 1251.2,450.7 1258.0,450.1 1264.8,449.4 1271.6,448.8 1278.4,448.3 1285.2,448.1 1292.0,448.1 1298.7,448.1" fill="none" stroke="#fdd835" stroke-opacity="0.85" stroke-width="1.3"/>
<polyline points="9.2,446.5 16.0,447.7 22.8,451.5 29.6,461.2 36.4,453.5 43.1,447.3 49.9,447.0 56.7,438.3 63.5,435.8 70.3,440.6 77.1,448.2 83.9,448.4 90.7,450.2 97.4,451.6 104.2,453.5 111.0,455.8 117.8,453.6 124.6,453.6 131.4,459.3 138.2,463.4 145.0,464.9 151.7,450.9 158.5,447.7 165.3,448.3 172.1,452.5 178.9,450.9 185.7,447.9 192.5,441.4 199.2,445.3 206.0,451.0 212.8,440.2 219.6,437.2 226.4,444.4 233.2,442.4 240.0,436.3 246.8,439.6 253.5,436.5 260.3,429.1 267.1,420.6 273.9,417.7 280.7,420.5 287.5,420.8 294.3,420.8 301.1,419.8 307.8,412.4 314.6,410.1 321.4,403.7 328.2,402.0 335.0,395.3 341.8,397.6 348.6,397.6 355.4,421.9 362.1,427.1 368.9,425.1 375.7,426.4 382.5,423.9 389.3,433.2 396.1,434.2 402.9,436.3 409.6,441.9 416.4,446.2 423.2,450.7 430.0,445.3 436.8,438.9 443.6,443.9 450.4,440.6 457.2,432.2 463.9,428.6 470.7,424.8 477.5,428.5 484.3,435.0 491.1,428.9 497.9,425.5 504.7,435.8 511.5,433.6 518.2,432.6 525.0,431.3 531.8,437.5 538.6,443.3 545.4,437.2 552.2,440.2 559.0,429.3 565.7,431.4 572.5,433.6 579.3,442.9 586.1,439.1 592.9,438.9 599.7,436.4 606.5,440.9 613.3,440.0 620.0,441.2 626.8,442.6 633.6,440.1 640.4,436.9 647.2,441.6 654.0,437.9 660.8,438.8 667.6,431.6 674.3,425.6 681.1,426.0 687.9,424.0 694.7,419.3 701.5,412.5 708.3,408.6 715.1,416.5 721.8,423.0 728.6,422.4 735.4,417.8 742.2,420.3 749.0,428.7 755.8,427.6 762.6,432.1 769.4,441.3 776.1,443.1 782.9,441.3 789.7,449.1 796.5,443.7 803.3,444.6 810.1,440.3 816.9,442.0 823.7,442.2 830.4,433.8 837.2,428.0 844.0,430.2 850.8,434.2 857.6,433.4 864.4,426.7 871.2,437.6 877.9,433.3 884.7,436.9 891.5,456.2 898.3,458.2 905.1,448.3 911.9,445.6 918.7,448.3 925.5,450.7 932.2,453.0 939.0,454.1 945.8,451.4 952.6,448.5 959.4,445.8 966.2,448.1 973.0,449.8 979.8,446.7 986.5,445.0 993.3,445.6 1000.1,439.9 1006.9,443.1 1013.7,446.0 1020.5,446.5 1027.3,451.5 1034.0,448.8 1040.8,447.5 1047.6,448.4 1054.4,457.1 1061.2,458.9 1068.0,455.0 1074.8,457.4 1081.6,444.4 1088.3,445.9 1095.1,443.7 1101.9,441.9 1108.7,447.3 1115.5,448.3 1122.3,451.4 1129.1,454.7 1135.9,449.8 1142.6,452.3 1149.4,455.5 1156.2,447.4 1163.0,451.0 1169.8,453.8 1176.6,457.8 1183.4,457.8 1190.2,452.7 1196.9,446.7 1203.7,445.7 1210.5,444.9 1217.3,446.1 1224.1,448.1 1230.9,449.5 1237.7,451.1 1244.4,457.5 1251.2,447.2 1258.0,441.9 1264.8,444.6 1271.6,449.9 1278.4,449.9 1285.2,450.4 1292.0,446.4 1298.7,446.4" fill="none" stroke="#7e57c2" stroke-width="1.3"/>
<polyline points="9.2,532.0 16.0,533.2 22.8,537.1 29.6,539.3 36.4,538.4 43.1,532.6 49.9,527.5 56.7,521.5 63.5,516.3 70.3,513.0 77.1,517.2 83.9,522.4 90.7,526.7 97.4,528.2 104.2,531.8 111.0,534.8 117.8,535.8 124.6,535.1 131.4,535.9 138.2,537.6 145.0,537.8 151.7,532.4 158.5,526.0 165.3,519.3 172.1,516.8 178.9,514.6 185.7,512.7 192.5,507.3 199.2,503.1 206.0,503.9 212.8,500.9 219.6,496.3 226.4,494.2 233.2,497.7 240.0,498.4 246.8,500.3 253.5,499.9 260.3,501.2 267.1,491.3 273.9,489.5 280.7,491.2 287.5,496.8 294.3,498.0 301.1,497.5 307.8,494.2 314.6,489.7 321.4,488.4 328.2,489.2 335.0,488.5 341.8,487.1 348.6,486.4 355.4,494.8 362.1,503.9 368.9,511.8 375.7,513.9 382.5,512.0 389.3,514.5 396.1,518.1 402.9,526.0 409.6,533.5 416.4,538.8 423.2,542.1 430.0,540.3 436.8,536.0 443.6,533.2 450.4,529.5 457.2,522.7 463.9,510.6 470.7,498.2 477.5,494.2 484.3,497.1 491.1,498.1 497.9,494.9 504.7,495.9 511.5,500.4 518.2,506.2 525.0,503.7 531.8,507.2 538.6,516.1 545.4,522.4 552.2,528.5 559.0,518.3 565.7,512.9 572.5,505.4 579.3,518.7 586.1,526.3 592.9,531.5 599.7,523.2 606.5,524.2 613.3,524.3 620.0,530.2 626.8,531.5 633.6,531.6 640.4,527.2 647.2,526.6 654.0,524.9 660.8,527.1 667.6,513.2 674.3,500.0 681.1,488.7 687.9,486.9 694.7,486.0 701.5,482.7 708.3,484.3 715.1,490.0 721.8,497.5 728.6,502.1 735.4,501.5 742.2,499.5 749.0,500.7 755.8,504.5 762.6,510.8 769.4,519.7 776.1,529.9 782.9,535.9 789.7,538.5 796.5,537.4 803.3,537.5 810.1,532.6 816.9,531.1 823.7,529.6 830.4,526.1 837.2,517.0 844.0,504.9 850.8,500.4 857.6,498.8 864.4,495.9 871.2,498.2 877.9,498.3 884.7,506.0 891.5,505.2 898.3,509.2 905.1,507.2 911.9,504.8 918.7,502.5 925.5,503.8 932.2,506.9 939.0,509.3 945.8,510.1 952.6,509.3 959.4,507.1 966.2,505.8 973.0,505.4 979.8,505.0 986.5,506.6 993.3,508.5 1000.1,506.5 1006.9,504.8 1013.7,504.3 1020.5,509.1 1027.3,518.0 1034.0,523.1 1040.8,526.5 1047.6,524.5 1054.4,527.8 1061.2,531.2 1068.0,531.7 1074.8,531.0 1081.6,524.9 1088.3,521.6 1095.1,515.0 1101.9,512.5 1108.7,511.8 1115.5,512.6 1122.3,517.9 1129.1,524.3 1135.9,527.0 1142.6,530.2 1149.4,533.1 1156.2,532.7 1163.0,532.5 1169.8,531.7 1176.6,536.0 1183.4,537.4 1190.2,533.6 1196.9,528.4 1203.7,521.4 1210.5,515.9 1217.3,511.2 1224.1,509.6 1230.9,510.1 1237.7,514.4 1244.4,523.1 1251.2,523.5 1258.0,516.5 1264.8,505.9 1271.6,508.9 1278.4,517.7 1285.2,525.0 1292.0,522.5 1298.7,520.1" fill="none" stroke="#ff6d00" stroke-opacity="0.85" stroke-width="1.3"/>
<polyline points="9.2,535.8 16.0,535.0 22.8,542.4 29.6,540.3 36.4,532.4 43.1,525.3 49.9,525.0 56.7,514.2 63.5,509.8 70.3,514.9 77.1,526.8 83.9,525.5 90.7,527.8 97.4,531.3 104.2,536.3 111.0,536.9 117.8,534.2 124.6,534.2 131.4,539.3 138.2,539.4 145.0,534.8 151.7,523.1 158.5,519.9 165.3,514.9 172.1,515.7 178.9,513.3 185.7,509.2 192.5,499.3 199.2,500.8 206.0,511.6 212.8,490.2 219.6,487.2 226.4,505.1 233.2,500.9 240.0,489.1 246.8,510.9 253.5,499.7 260.3,492.9 267.1,481.2 273.9,494.5 280.7,497.8 287.5,498.1 294.3,498.1 301.1,496.3 307.8,488.2 314.6,484.4 321.4,492.5 328.2,490.8 335.0,482.2 341.8,488.4 348.6,488.6 355.4,507.3 362.1,515.6 368.9,512.3 375.7,513.7 382.5,510.0 389.3,519.8 396.1,524.6 402.9,533.5 409.6,542.4 416.4,540.4 423.2,543.4 430.0,536.9 436.8,527.6 443.6,535.1 450.4,525.6 457.2,507.4 463.9,498.7 470.7,488.6 477.5,495.3 484.3,507.3 491.1,491.8 497.9,485.5 504.7,510.3 511.5,505.3 518.2,503.0 525.0,502.9 531.8,515.8 538.6,529.7 545.4,521.8 552.2,533.9 559.0,499.3 565.7,505.4 572.5,511.6 579.3,539.2 586.1,528.0 592.9,527.4 599.7,514.2 606.5,530.9 613.3,527.7 620.0,532.1 626.8,534.7 633.6,527.9 640.4,519.1 647.2,532.9 654.0,522.8 660.8,525.5 667.6,491.2 674.3,483.1 681.1,491.9 687.9,485.6 694.7,480.4 701.5,482.0 708.3,490.4 715.1,497.5 721.8,504.5 728.6,504.3 735.4,495.7 742.2,498.5 749.0,508.0 755.8,507.1 762.6,517.3 769.4,534.6 776.1,538.0 782.9,535.3 789.7,542.1 796.5,534.9 803.3,535.4 810.1,527.4 816.9,530.5 823.7,530.9 830.4,516.9 837.2,503.2 844.0,494.5 850.8,503.5 857.6,498.5 864.4,485.6 871.2,510.5 877.9,498.9 884.7,508.7 891.5,507.8 898.3,510.9 905.1,502.9 911.9,500.6 918.7,503.9 925.5,506.9 932.2,509.8 939.0,511.2 945.8,509.3 952.6,507.3 959.4,504.7 966.2,505.4 973.0,506.1 979.8,503.5 986.5,510.1 993.3,511.9 1000.1,497.6 1006.9,505.0 1013.7,510.2 1020.5,512.1 1027.3,531.5 1034.0,525.6 1040.8,522.3 1047.6,525.6 1054.4,535.5 1061.2,532.4 1068.0,527.1 1074.8,533.5 1081.6,514.1 1088.3,517.2 1095.1,513.7 1101.9,506.6 1108.7,515.2 1115.5,515.9 1122.3,522.6 1129.1,534.3 1135.9,524.2 1142.6,532.1 1149.4,543.0 1156.2,523.0 1163.0,531.6 1169.8,540.6 1176.6,535.8 1183.4,535.8 1190.2,529.1 1196.9,520.3 1203.7,514.9 1210.5,512.6 1217.3,506.0 1224.1,510.1 1230.9,514.3 1237.7,518.9 1244.4,536.3 1251.2,515.2 1258.0,498.1 1264.8,504.2 1271.6,524.4 1278.4,524.4 1285.2,526.3 1292.0,516.9 1298.7,517.1" fill="none" stroke="#2962ff" stroke-opacity="0.85" stroke-width="1.3"/>
</g>
<text x="23.8" y="59.8" font-size="15.5" fill="#131722" textLength="241.5" lengthAdjust="spacingAndGlyphs" stroke="#131722" stroke-width="0.25">Dogecoin / TetherUS · 1D · Binance</text>
<text x="276.3" y="59.8" font-size="15.5" fill="#131722" textLength="63.4" lengthAdjust="spacingAndGlyphs" stroke="#131722" stroke-width="0.25">O0.14260</text>
<text x="350.6" y="59.8" font-size="15.5" fill="#131722" textLength="61.3" lengthAdjust="spacingAndGlyphs" stroke="#131722" stroke-width="0.25">H0.14271</text>
<text x="423.6" y="59.8" font-size="15.5" fill="#131722" textLength="61.1" lengthAdjust="spacingAndGlyphs" stroke="#131722" stroke-width="0.25">L0.14228</text>
<text x="494.7" y="59.8" font-size="15.5" fill="#131722" textLength="63.0" lengthAdjust="spacingAndGlyphs" stroke="#131722" stroke-width="0.25">C0.14245</text>
<text x="567.8" y="59.8" font-size="15.5" fill="#131722" textLength="123.1" lengthAdjust="spacingAndGlyphs" stroke="#131722" stroke-width="0.25">−0.00014 (−0.10%)</text>
<text x="23.8" y="81.8" font-size="15.5" fill="#131722" textLength="137.3" lengthAdjust="spacingAndGlyphs" stroke="#131722" stroke-width="0.25">EMA 20/50/100/200</text>
<text x="23.4" y="412.0" font-size="15.5" fill="#131722" textLength="20.0" lengthAdjust="spacingAndGlyphs" stroke="#131722" stroke-width="0.25">RSI</text>
<text x="23.6" y="497.2" font-size="15.5" fill="#131722" textLength="36.1" lengthAdjust="spacingAndGlyphs" stroke="#131722" stroke-width="0.25">Stoch</text>
<rect x="1441" y="40" width="77" height="32.5" rx="6" fill="#fff" stroke="#ececec" stroke-width="1"/>
<text x="1453.5" y="61.6" font-size="16.8" fill="#131722" textLength="34.7" lengthAdjust="spacingAndGlyphs" stroke="#131722" stroke-width="0.25">USDT</text>
<text x="1448.4" y="114.2" font-size="15.5" fill="#131722" textLength="53.2" lengthAdjust="spacingAndGlyphs" stroke="#131722" stroke-width="0.25">0.30000</text>
<text x="1448.4" y="180.5" font-size="15.5" fill="#131722" textLength="53.2" lengthAdjust="spacingAndGlyphs" stroke="#131722" stroke-width="0.25">0.25000</text>
<rect x="1436.8" y="114.0" width="71.8" height="23.0" rx="1.5" fill="#333333"/>
<text x="1447.7" y="130.7" font-size="15.0" fill="#fff" textLength="53.0" lengthAdjust="spacingAndGlyphs" stroke="#fff" stroke-width="0.55">0.28816</text>
<rect x="1436.8" y="152.6" width="71.8" height="22.4" rx="1.5" fill="#555555"/>
<text x="1447.7" y="169.0" font-size="15.0" fill="#fff" textLength="53.0" lengthAdjust="spacingAndGlyphs" stroke="#fff" stroke-width="0.55">0.25956</text>
<rect x="1436.8" y="180.2" width="71.8" height="22.2" rx="1.5" fill="#000000"/>
<text x="1447.7" y="196.5" font-size="15.0" fill="#fff" textLength="53.0" lengthAdjust="spacingAndGlyphs" stroke="#fff" stroke-width="0.55">0.21061</text>
<rect x="1436.8" y="202.4" width="71.8" height="22.7" rx="1.5" fill="#0000ff"/>
<text x="1447.7" y="218.9" font-size="15.0" fill="#fff" textLength="53.0" lengthAdjust="spacingAndGlyphs" stroke="#fff" stroke-width="0.55">0.19750</text>
<rect x="1436.8" y="225.1" width="71.8" height="21.0" rx="1.5" fill="#00ffff"/>
<text x="1447.7" y="240.8" font-size="15.0" fill="#000" textLength="53.0" lengthAdjust="spacingAndGlyphs" stroke="#000" stroke-width="0.55">0.18363</text>
<rect x="1436.8" y="246.1" width="71.8" height="22.4" rx="1.5" fill="#4c4c4c"/>
<text x="1447.7" y="262.5" font-size="15.0" fill="#fff" textLength="53.0" lengthAdjust="spacingAndGlyphs" stroke="#fff" stroke-width="0.55">0.18094</text>
<rect x="1436.8" y="268.5" width="71.8" height="21.5" rx="1.5" fill="#ff8000"/>
<text x="1447.7" y="284.4" font-size="15.0" fill="#fff" textLength="53.0" lengthAdjust="spacingAndGlyphs" stroke="#fff" stroke-width="0.55">0.16498</text>
<rect x="1436.8" y="290.0" width="71.8" height="20.7" rx="1.5" fill="#ff0000"/>
<text x="1447.7" y="305.6" font-size="15.0" fill="#fff" textLength="53.0" lengthAdjust="spacingAndGlyphs" stroke="#fff" stroke-width="0.55">0.14786</text>
<rect x="1436.6" y="310.7" width="76.4" height="40.7" rx="2" fill="#000"/>
<text x="1447.7" y="327.3" font-size="15.0" fill="#fff" textLength="53.0" lengthAdjust="spacingAndGlyphs" stroke="#fff" stroke-width="0.55">0.14245</text>
<text x="1447.9" y="345.6" font-size="15.0" fill="#b2b5be" textLength="59.3" lengthAdjust="spacingAndGlyphs" stroke="#b2b5be" stroke-width="0.55">23:38:38</text>
<rect x="1436.6" y="351.4" width="71.8" height="35" fill="#000"/>
<text x="1447.7" y="368.0" font-size="15.0" fill="#fff" textLength="53.0" lengthAdjust="spacingAndGlyphs" stroke="#fff" stroke-width="0.55">0.14238</text>
<text x="1447.7" y="389.0" font-size="15.0" fill="#fff" textLength="53.0" lengthAdjust="spacingAndGlyphs" stroke="#fff" stroke-width="0.55">0.13152</text>
<rect x="1436" y="386.8" width="86" height="2.5" fill="#fff"/>
<text x="1448.0" y="407.6" font-size="15.5" fill="#131722" textLength="37.2" lengthAdjust="spacingAndGlyphs" stroke="#131722" stroke-width="0.25">80.00</text>
<rect x="1437.2" y="435.1" width="54.9" height="22.6" rx="2" fill="#7e57c2"/>
<text x="1447.5" y="451.6" font-size="15.0" fill="#fff" textLength="37.7" lengthAdjust="spacingAndGlyphs" stroke="#fff" stroke-width="0.55">42.06</text>
<rect x="1437.2" y="457.7" width="54.9" height="14" fill="#fdd835"/>
<text x="1447.5" y="474.0" font-size="15.0" fill="#131722" textLength="37.7" lengthAdjust="spacingAndGlyphs" stroke="#131722" stroke-width="0.55">40.54</text>
<rect x="1436" y="471.8" width="86" height="12" fill="#fff"/>
<line x1="1436" y1="472.3" x2="1522" y2="472.3" stroke="#e6e6e6" stroke-width="1"/>
<text x="1448.5" y="484.6" font-size="15.5" fill="#131722" textLength="44.4" lengthAdjust="spacingAndGlyphs" stroke="#131722" stroke-width="0.25">100.00</text>
<rect x="1437.2" y="504.4" width="54.9" height="21.3" rx="2" fill="#2962ff"/>
<text x="1447.5" y="520.5" font-size="15.0" fill="#fff" textLength="37.7" lengthAdjust="spacingAndGlyphs" stroke="#fff" stroke-width="0.55">42.65</text>
<rect x="1437.2" y="525.7" width="54.9" height="22.3" rx="2" fill="#ff6d00"/>
<text x="1447.5" y="542.3" font-size="15.0" fill="#fff" textLength="37.7" lengthAdjust="spacingAndGlyphs" stroke="#fff" stroke-width="0.55">37.81</text>
<text x="194.4" y="572.8" font-size="15.5" fill="#131722" textLength="22.0" lengthAdjust="spacingAndGlyphs" stroke="#131722" stroke-width="0.25">Jul</text>
<text x="402.2" y="572.8" font-size="15.5" fill="#131722" textLength="27.3" lengthAdjust="spacingAndGlyphs" stroke="#131722" stroke-width="0.25">Aug</text>
<text x="613.1" y="572.8" font-size="15.5" fill="#131722" textLength="25.8" lengthAdjust="spacingAndGlyphs" stroke="#131722" stroke-width="0.25">Sep</text>
<text x="817.1" y="572.8" font-size="15.5" fill="#131722" textLength="25.2" lengthAdjust="spacingAndGlyphs" stroke="#131722" stroke-width="0.25">Oct</text>
<text x="1026.2" y="572.8" font-size="15.5" fill="#131722" textLength="27.4" lengthAdjust="spacingAndGlyphs" stroke="#131722" stroke-width="0.25">Nov</text>
<text x="1230.5" y="572.8" font-size="15.5" fill="#131722" textLength="26.3" lengthAdjust="spacingAndGlyphs" stroke="#131722" stroke-width="0.25">Dec</text>
<g fill="#131722">
<path d="M15.2,613 H30.8 V632.5 H23.1 V620 H15.2 Z"/>
<circle cx="36.9" cy="617.2" r="3.3"/>
<path d="M42.2,613 H53.9 L46.9,632.5 H37.6 Z"/>
<text x="63" y="632.5" font-size="28" font-weight="bold" textLength="155" lengthAdjust="spacingAndGlyphs">TradingView</text>
</g>
</svg></body></html>
